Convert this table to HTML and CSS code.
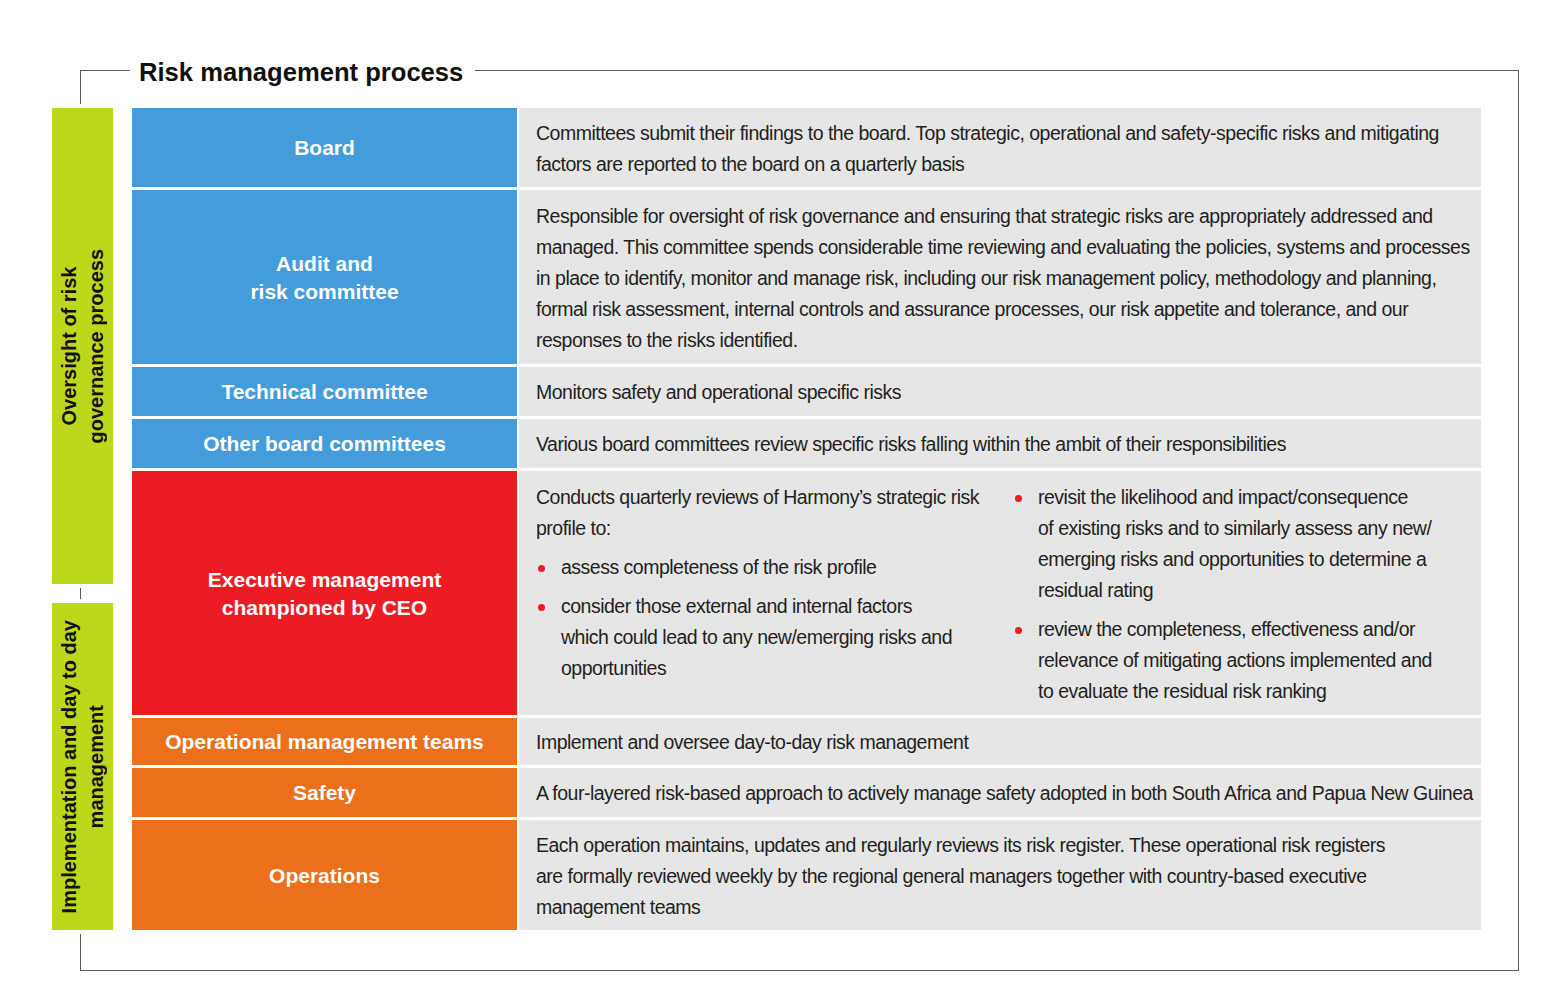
FILE: index.html
```html
<!DOCTYPE html>
<html lang="en">
<head>
<meta charset="utf-8">
<title>Risk management process</title>
<link rel="stylesheet" href="styles.css">
</head>
<body>
<fieldset class="frame">
  <legend class="title"><span class="title-text">Risk management process</span></legend>
  <div class="layout">
    <div class="sidebar">
      <div class="band band-oversight"><span class="band-text">Oversight of risk<br>governance process</span></div>
      <div class="band band-impl"><span class="band-text">Implementation and day to day<br>management</span></div>
    </div>
    <div class="matrix">
      <div class="role blue">Board</div>
      <div class="desc">Committees submit their findings to the board. Top strategic, operational and safety-specific risks and mitigating<br>factors are reported to the board on a quarterly basis</div>

      <div class="role blue">Audit and<br>risk committee</div>
      <div class="desc">Responsible for oversight of risk governance and ensuring that strategic risks are appropriately addressed and<br>managed. This committee spends considerable time reviewing and evaluating the policies, systems and processes<br>in place to identify, monitor and manage risk, including our risk management policy, methodology and planning,<br>formal risk assessment, internal controls and assurance processes, our risk appetite and tolerance, and our<br>responses to the risks identified.</div>

      <div class="role blue">Technical committee</div>
      <div class="desc">Monitors safety and operational specific risks</div>

      <div class="role blue">Other board committees</div>
      <div class="desc">Various board committees review specific risks falling within the ambit of their responsibilities</div>

      <div class="role red">Executive management<br>championed by CEO</div>
      <div class="desc">
        <div class="cols">
          <div class="col">
            <p class="lead">Conducts quarterly reviews of Harmony’s strategic risk<br>profile to:</p>
            <ul class="bullets">
              <li>assess completeness of the risk profile</li>
              <li>consider those external and internal factors<br>which could lead to any new/emerging risks and<br>opportunities</li>
            </ul>
          </div>
          <div class="col">
            <ul class="bullets">
              <li>revisit the likelihood and impact/consequence<br>of existing risks and to similarly assess any new/<br>emerging risks and opportunities to determine a<br>residual rating</li>
              <li>review the completeness, effectiveness and/or<br>relevance of mitigating actions implemented and<br>to evaluate the residual risk ranking</li>
            </ul>
          </div>
        </div>
      </div>

      <div class="role orange">Operational management teams</div>
      <div class="desc">Implement and oversee day-to-day risk management</div>

      <div class="role orange">Safety</div>
      <div class="desc">A four-layered risk-based approach to actively manage safety adopted in both South Africa and Papua New Guinea</div>

      <div class="role orange">Operations</div>
      <div class="desc">Each operation maintains, updates and regularly reviews its risk register. These operational risk registers<br>are formally reviewed weekly by the regional general managers together with country-based executive<br>management teams</div>
    </div>
  </div>
</fieldset>
</body>
</html>
```
FILE: styles.css
```css
* { box-sizing: border-box; }

html, body {
  margin: 0;
  padding: 0;
  background: #ffffff;
}

body {
  width: 1566px;
  height: 981px;
  overflow: hidden;
  font-family: "Liberation Sans", Arial, sans-serif;
}

.frame {
  margin: 55px 0 0 80px;
  width: 1439px;
  padding: 23px 0 40px 0;
  border: 1px solid #5c5c5c;
  min-width: 0;
}

.title {
  margin-left: 49px;
  padding: 0 12px 0 9px;
  font-family: "Liberation Sans", Arial, sans-serif;
  font-weight: 700;
  font-size: 25.6px;
  line-height: 30px;
  color: #111111;
}

.title-text {
  position: relative;
  top: 2px;
}

.layout {
  display: flex;
  align-items: flex-start;
  margin-left: -29px;
  gap: 19px;
}

.sidebar {
  width: 61px;
  display: flex;
  flex-direction: column;
  gap: 19px;
  flex: none;
}

.band {
  background: #bdd71a;
  box-shadow: 0 0 0 4px #ffffff;
  display: flex;
  align-items: center;
  justify-content: center;
}

.band-oversight { height: 476px; }
.band-impl { height: 327px; }

.band-text {
  writing-mode: vertical-rl;
  transform: rotate(180deg);
  text-align: center;
  font-family: "Liberation Sans", Arial, sans-serif;
  font-weight: 700;
  font-size: 20px;
  line-height: 27px;
  color: #111111;
  white-space: nowrap;
}

.matrix {
  width: 1349px;
  flex: none;
  display: grid;
  grid-template-columns: 385px 962px;
  grid-template-rows: 79px 174px 49px 49px 244px 47px 49px 110px;
  column-gap: 2px;
  row-gap: 3px;
}

.role {
  display: flex;
  align-items: center;
  justify-content: center;
  text-align: center;
  color: #ffffff;
  font-family: "Liberation Sans", Arial, sans-serif;
  font-weight: 700;
  font-size: 21px;
  line-height: 28px;
  padding-top: 1px;
}

.blue { background: #459cdb; }
.red { background: #ed1c24; }
.orange { background: #ec6f1b; }

.desc {
  background: #e6e6e6;
  display: flex;
  flex-direction: column;
  justify-content: center;
  padding: 2px 16px 0 17px;
  font-family: "Liberation Sans", Arial, sans-serif;
  font-size: 19.5px;
  letter-spacing: -0.5px;
  line-height: 31px;
  color: #231f20;
  white-space: nowrap;
}

.cols {
  display: grid;
  grid-template-columns: 460px 1fr;
  column-gap: 17px;
}

.lead {
  margin: 0 0 8px 0;
}

.bullets {
  list-style: none;
  margin: 0;
  padding: 0;
}

.bullets li {
  position: relative;
  padding-left: 25px;
  margin-bottom: 8px;
}

.bullets li:last-child { margin-bottom: 0; }

.bullets li::before {
  content: "";
  position: absolute;
  left: 2px;
  top: 13px;
  width: 7px;
  height: 7px;
  border-radius: 50%;
  background: #ed1c24;
}
```
